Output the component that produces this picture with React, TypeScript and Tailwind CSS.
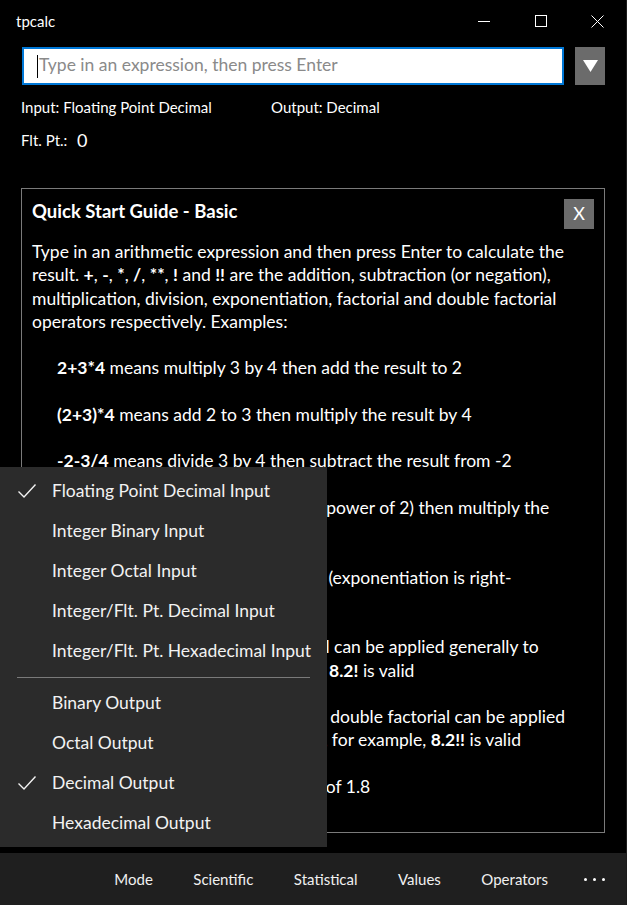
import React from 'react';

const menuItems: { label: string; checked?: boolean }[] = [
  { label: 'Floating Point Decimal Input', checked: true },
  { label: 'Integer Binary Input' },
  { label: 'Integer Octal Input' },
  { label: 'Integer/Flt. Pt. Decimal Input' },
  { label: 'Integer/Flt. Pt. Hexadecimal Input' },
];

const outputItems: { label: string; checked?: boolean }[] = [
  { label: 'Binary Output' },
  { label: 'Octal Output' },
  { label: 'Decimal Output', checked: true },
  { label: 'Hexadecimal Output' },
];

const Check = () => (
  <svg width="20" height="16" viewBox="0 0 20 16" className="shrink-0">
    <path d="M1.5 8.5 L7 14 L18.5 1.5" fill="none" stroke="#f2f2f2" strokeWidth="1.4" />
  </svg>
);

const MenuItem = ({ label, checked }: { label: string; checked?: boolean }) => (
  <div className="h-[40px] flex items-center pl-[17px]">
    <div className="w-[35px]">{checked && <Check />}</div>
    <span className="whitespace-nowrap">{label}</span>
  </div>
);

const Blank = () => <div className="h-[23.26px]" />;

export default function App() {
  return (
    <div className="w-[627px] h-[905px] bg-black text-white relative overflow-hidden flex flex-col font-['Lato',sans-serif] border-r border-[#1c1c1c]">
      {/* title bar */}
      <div className="h-[42px] flex items-center shrink-0">
        <span className="pl-[16px] text-[15px] flex-1">tpcalc</span>
        <div className="flex h-full">
          <div className="w-[57px] flex items-center justify-center">
            <div className="w-[12px] h-px bg-white" />
          </div>
          <div className="w-[57px] flex items-center justify-center">
            <div className="w-[12px] h-[12px] border border-white" />
          </div>
          <div className="w-[57px] flex items-center justify-center">
            <svg width="13" height="13" viewBox="0 0 13 13">
              <path d="M0.5 0.5 L12.5 12.5 M12.5 0.5 L0.5 12.5" stroke="white" strokeWidth="1" />
            </svg>
          </div>
        </div>
      </div>

      {/* input row */}
      <div className="flex pl-[22px] pr-[21px] mt-[5px] gap-[11px]">
        <div className="flex-1 h-[38px] bg-white border-2 border-[#0078d7] flex items-center pl-[13px]">
          <div className="w-px h-[23px] bg-black" />
          <span className="text-[17.5px] text-[#8a8a8a] ml-[1px] -mt-[2px]">Type in an expression, then press Enter</span>
        </div>
        <div className="w-[30px] h-[38px] bg-[#6b6b6b] flex items-center justify-center">
          <svg width="15" height="12" viewBox="0 0 15 12">
            <path d="M0 0 L15 0 L7.5 12 Z" fill="white" />
          </svg>
        </div>
      </div>

      <div className="flex pl-[21px] mt-[11px] text-[15px] h-[22px] items-center">
        <span className="w-[250px]">Input: Floating Point Decimal</span>
        <span>Output: Decimal</span>
      </div>
      <div className="flex pl-[21px] mt-[11px] h-[22px] items-center">
        <span className="text-[15px] w-[56px]">Flt. Pt.:</span>
        <span className="text-[18px]">0</span>
      </div>

      {/* quick start guide */}
      <div className="mx-[21px] mt-[37px] h-[645px] border border-[#7a7a7a] px-[10px] pt-[9px] text-[17.5px] leading-[23.26px] shrink-0">
        <div className="flex items-start justify-between">
          <div className="font-bold text-[18.5px] pt-[2px]">Quick Start Guide - Basic</div>
          <div className="w-[30px] h-[30px] bg-[#6b6b6b] flex items-center justify-center text-[18px] mt-px">X</div>
        </div>
        <div className="mt-[11px] whitespace-nowrap">
          <div>Type in an arithmetic expression and then press Enter to calculate the</div>
          <div>
            result. <b>+</b>, <b>-</b>, <b>*</b>, <b>/</b>, <b>**</b>, <b>!</b> and <b>!!</b> are the addition, subtraction (or negation),
          </div>
          <div>multiplication, division, exponentiation, factorial and double factorial</div>
          <div>operators respectively. Examples:</div>
          <Blank />
          <div className="pl-[25px]">
            <div><b>2+3*4</b> means multiply 3 by 4 then add the result to 2</div>
            <Blank />
            <div><b>(2+3)*4</b> means add 2 to 3 then multiply the result by 4</div>
            <Blank />
            <div><b>-2-3/4</b> means divide 3 by 4 then subtract the result from -2</div>
            <Blank />
            <div><b>2*3**2</b> means square 3 (ie 3 to the power of 2) then multiply the</div>
            <div>result by 2</div>
            <Blank />
            <div><b>2**3**2</b> means 2 to the power of 9 (exponentiation is right-</div>
            <div>associative)</div>
            <Blank />
            <div><b>4!</b> means factorial of 4; the factorial can be applied generally to</div>
            <div>non-integral numbers, for example, <b>8.2!</b> is valid</div>
            <Blank />
            <div><b>5!!</b> means 5 double factorial, so the double factorial can be applied</div>
            <div>generally to non-integer values too, for example, <b>8.2!!</b> is valid</div>
            <Blank />
            <div><b>-1.8!</b> means to negate the factorial of 1.8</div>
          </div>
        </div>
      </div>

      <div className="flex-1" />

      {/* command bar */}
      <div className="h-[52px] bg-[#1f1f1f] flex items-center justify-end pr-[20px] text-[15px] text-[#f0f0f0] shrink-0">
        <div className="flex gap-[40.5px] items-center">
          <span>Mode</span>
          <span>Scientific</span>
          <span>Statistical</span>
          <span>Values</span>
          <span>Operators</span>
        </div>
        <div className="ml-[34px] flex gap-[6px] w-[24px] justify-center">
          <div className="w-[3px] h-[3px] bg-white rounded-full" />
          <div className="w-[3px] h-[3px] bg-white rounded-full" />
          <div className="w-[3px] h-[3px] bg-white rounded-full" />
        </div>
      </div>

      {/* flyout menu */}
      <div className="absolute left-0 top-[467px] w-[327px] bg-[#2b2b2b] py-[4px] text-[17.5px] text-[#f2f2f2]">
        {menuItems.map((m) => (
          <MenuItem key={m.label} {...m} />
        ))}
        <div className="h-[12px] flex items-center px-[17px]">
          <div className="h-px w-full bg-[#7a7a7a]" />
        </div>
        {outputItems.map((m) => (
          <MenuItem key={m.label} {...m} />
        ))}
      </div>
    </div>
  );
}
